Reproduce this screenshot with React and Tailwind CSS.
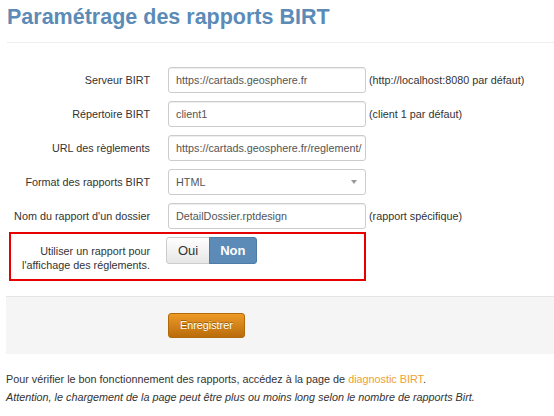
import React from 'react'

const rows = [
  { label: 'Serveur BIRT', value: 'https://cartads.geosphere.fr', help: '(http://localhost:8080 par défaut)' },
  { label: 'Répertoire BIRT', value: 'client1', help: '(client 1 par défaut)' },
  { label: 'URL des règlements', value: 'https://cartads.geosphere.fr/reglement/' },
]

function Field({ value }) {
  return (
    <input
      readOnly
      value={value}
      className="h-[26px] w-[198px] rounded-[3px] border border-[#ccc] bg-white pl-[7px] pr-[3px] font-['Liberation_Sans',Arial,sans-serif] text-[10.8px] text-[#555] shadow-[inset_0_1px_1px_rgba(0,0,0,0.075)] outline-none"
    />
  )
}

function Row({ label, children, help, className = '' }) {
  return (
    <div className={`flex h-[26px] items-center ${className}`}>
      <label className="w-[150px] shrink-0 text-right">{label}</label>
      <div className="ml-[18px] shrink-0">{children}</div>
      {help ? <span className="ml-[3px] whitespace-nowrap">{help}</span> : null}
    </div>
  )
}

export default function App() {
  return (
    <div className="h-[416px] w-[554px] overflow-hidden bg-white font-['Liberation_Sans',Arial,sans-serif] text-[10.8px] text-[#333]">
      <h1 className="ml-[7px] border-b border-[#eee] pt-[5px] pb-[13px] text-[21.5px] leading-[24px] font-bold text-[#5b8bb6]">
        Paramétrage des rapports BIRT
      </h1>

      <form className="mt-[24px]">
        {rows.map((row) => (
          <Row key={row.label} label={row.label} help={row.help} className="mb-[8px]">
            <Field value={row.value} />
          </Row>
        ))}

        <Row label="Format des rapports BIRT" className="mt-[1px] mb-[8px]">
          <div className="relative flex h-[26px] w-[198px] items-center rounded-[3px] border border-[#ccc] bg-white px-[7px] text-[10.8px] text-[#555]">
            HTML
            <span className="absolute right-[8px] top-[10px] h-0 w-0 border-x-[3px] border-t-[4px] border-x-transparent border-t-[#999]" />
          </div>
        </Row>

        <Row label="Nom du rapport d'un dossier" help="(rapport spécifique)" className="mb-[3px]">
          <Field value="DetailDossier.rptdesign" />
        </Row>

        <div className="ml-[9px] flex h-[49px] w-[357px] items-start border-2 border-[#e60000]">
          <label className="w-[139px] shrink-0 pt-[10px] text-right leading-[14px]">
            Utiliser un rapport pour
            <br />
            l'affichage des réglements.
          </label>
          <div className="ml-[16px] mt-[3px] flex h-[27px] text-[13px]">
            <button
              type="button"
              className="rounded-l-[3px] border border-[#ccc] bg-gradient-to-b from-white to-[#e6e6e6] px-[11px] text-[#333]"
            >
              Oui
            </button>
            <button
              type="button"
              className="-ml-px rounded-r-[3px] border border-[#4d7ca6] bg-[#5b8bb6] px-[10px] font-bold text-white"
            >
              Non
            </button>
          </div>
        </div>

        <div className="mt-[15px] ml-[6px] flex h-[58px] items-center border-t border-[#e5e5e5] bg-[#f5f5f5] pl-[162px]">
          <button
            type="button"
            className="h-[25px] rounded-[3px] border border-[#b06a0a] bg-gradient-to-b from-[#ee9a26] to-[#b96c0a] px-[11px] text-[10.8px] text-white [text-shadow:0_-1px_0_rgba(0,0,0,0.35)]"
          >
            Enregistrer
          </button>
        </div>
      </form>

      <div className="mt-[16px] ml-[6px] leading-[18px]">
        <p>
          Pour vérifier le bon fonctionnement des rapports, accédez à la page de{' '}
          <a className="text-[#f0a030]">diagnostic BIRT</a>.
        </p>
        <p className="italic">Attention, le chargement de la page peut être plus ou moins long selon le nombre de rapports Birt.</p>
      </div>
    </div>
  )
}
